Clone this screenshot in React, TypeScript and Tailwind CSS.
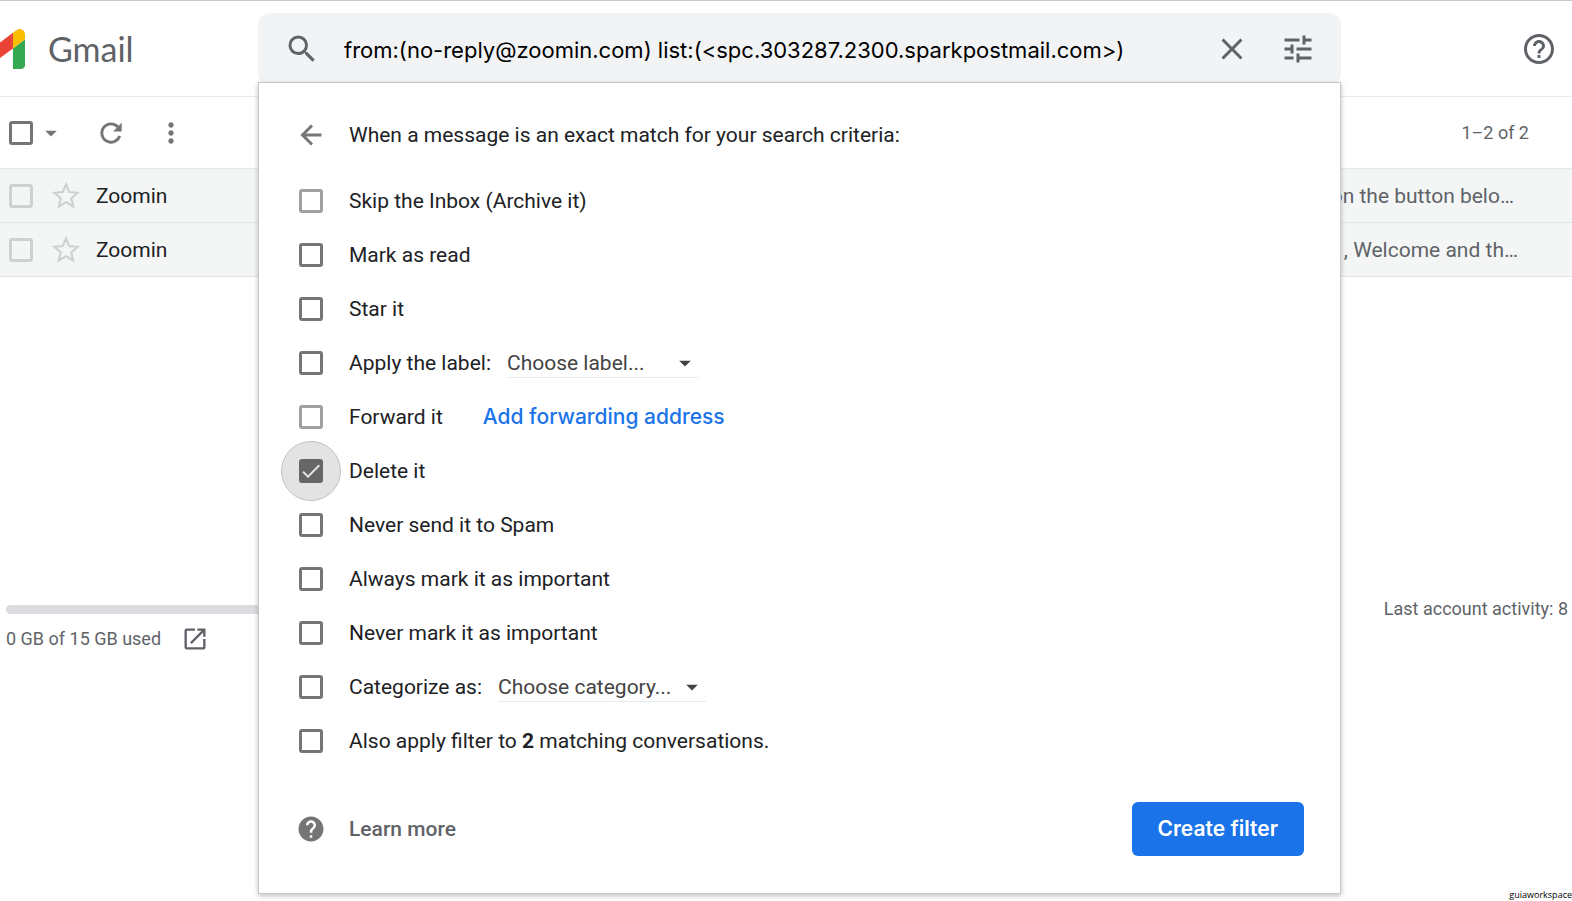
import { useState } from "react";
import type { ReactNode } from "react";
import {
  MdArrowDropDown,
  MdCheck,
  MdClose,
  MdHelp,
  MdHelpOutline,
  MdMoreVert,
  MdOpenInNew,
  MdSearch,
  MdTune,
} from "react-icons/md";
import { clsx } from "clsx";

const emails = [
  { id: "m1", sender: "Zoomin", snippet: "on the button belo…", pad: "pr-[58px]" },
  { id: "m2", sender: "Zoomin", snippet: ", Welcome and th…", pad: "pr-[54px]" },
];

type Action = {
  id: string;
  label: ReactNode;
  disabled?: boolean;
  extra?: ReactNode;
};

const actions: Action[] = [
  { id: "archive", label: "Skip the Inbox (Archive it)", disabled: true },
  { id: "read", label: "Mark as read" },
  { id: "star", label: "Star it" },
  {
    id: "label",
    label: "Apply the label:",
    extra: <Picker name="Label" placeholder="Choose label..." className="w-48" />,
  },
  {
    id: "forward",
    label: "Forward it",
    disabled: true,
    extra: (
      <a href="#forwarding" className="ml-6 font-['Google_Sans',Inter,sans-serif] font-medium text-[#1a73e8]">
        Add forwarding address
      </a>
    ),
  },
  { id: "delete", label: "Delete it" },
  { id: "notspam", label: "Never send it to Spam" },
  { id: "important", label: "Always mark it as important" },
  { id: "unimportant", label: "Never mark it as important" },
  {
    id: "category",
    label: "Categorize as:",
    extra: <Picker name="Category" placeholder="Choose category..." className="w-52" />,
  },
  {
    id: "existing",
    label: (
      <>
        Also apply filter to <b>2</b> matching conversations.
      </>
    ),
  },
];

function Picker({ name, placeholder, className }: { name: string; placeholder: string; className: string }) {
  return (
    <div className={clsx("relative border-b border-[#e8eaed] text-[#444]", className)}>
      <select aria-label={name} className="block h-7 w-full appearance-none bg-transparent outline-none">
        <option>{placeholder}</option>
      </select>
      <MdArrowDropDown size={28} className="pointer-events-none absolute right-0 top-0" />
    </div>
  );
}

function GmailLogo() {
  return (
    <svg viewBox="52 42 88 66" className="-ml-7 h-10 w-[53px] shrink-0">
      <path fill="#4285f4" d="M58 108h14V74L52 59v43c0 3.32 2.69 6 6 6" />
      <path fill="#34a853" d="M120 108h14c3.32 0 6-2.69 6-6V59l-20 15" />
      <path fill="#fbbc04" d="M120 48v26l20-15v-8c0-7.42-8.47-11.65-14.4-7.2" />
      <path fill="#ea4335" d="M72 74V48l24 18 24-18v26L96 92" />
      <path fill="#c5221f" d="M52 51v8l20 15V48l-5.6-4.2c-5.94-4.45-14.4-.22-14.4 7.2" />
    </svg>
  );
}

function BackIcon() {
  return (
    <svg viewBox="0 0 32 32" className="size-8" fill="none" stroke="currentColor" strokeWidth="3">
      <path d="M26.5 16H8M17 6.5L7.5 16l9.5 9.5" />
    </svg>
  );
}

function RefreshIcon() {
  return (
    <svg viewBox="0 0 32 32" className="size-8" fill="none" stroke="currentColor" strokeWidth="2.8">
      <path d="M23 10A9.2 9.2 0 1 0 24.7 19" />
      <path d="M26.7 5.8V14.5H18z" fill="currentColor" stroke="none" />
    </svg>
  );
}

function StarIcon() {
  return (
    <svg viewBox="0 0 24 24" className="size-7" fill="none" stroke="currentColor" strokeWidth="1.8">
      <path d="M12 17.27 18.18 21l-1.64-7.03L22 9.24l-7.19-.61L12 2 9.19 8.63 2 9.24l5.46 4.73L5.82 21z" />
    </svg>
  );
}

function FilterPanel() {
  const [checked, setChecked] = useState<Record<string, boolean>>({ delete: true });

  return (
    <div className="absolute inset-x-0 top-[69px] z-10 border border-[#c8c9ca] bg-white pt-[25px] pr-9 pb-[37px] pl-10 text-[#202124] shadow-[0_2px_5px_rgba(0,0,0,0.25)]">
      <div className="mb-3 flex h-[54px] items-center">
        <button aria-label="Back" className="-ml-1 mr-[22px] text-[#777]">
          <BackIcon />
        </button>
        <h2>When a message is an exact match for your search criteria:</h2>
      </div>

      {actions.map((action) => (
        <div key={action.id} className="flex h-[54px] items-center">
          <span className="relative mr-[26px] flex size-6 items-center justify-center">
            {checked[action.id] && (
              <span className="absolute -inset-[18px] rounded-full border border-[#bdc1c6] bg-[#e3e3e3]" />
            )}
            <input
              id={action.id}
              type="checkbox"
              checked={!!checked[action.id]}
              disabled={action.disabled}
              onChange={(e) => setChecked({ ...checked, [action.id]: e.target.checked })}
              className={clsx(
                "relative size-6 appearance-none rounded-[3px] border-3 checked:bg-[#666]",
                action.disabled ? "border-[#a0a0a0]" : checked[action.id] ? "border-[#666]" : "border-[#757575]"
              )}
            />
            {checked[action.id] && <MdCheck size={24} className="pointer-events-none absolute text-[#e3e3e3]" />}
          </span>
          <label htmlFor={action.id} className="mr-4">
            {action.label}
          </label>
          {action.extra}
        </div>
      ))}

      <div className="mt-[34px] flex items-center justify-between">
        <a href="#help" className="flex items-center gap-[23px] font-medium text-[#5f6368]">
          <MdHelp size={30} className="-ml-[3px] text-[#757575]" />
          Learn more
        </a>
        <button className="h-[54px] rounded-md bg-[#1a73e8] px-[26px] font-['Google_Sans',Inter,sans-serif] font-semibold text-white">
          Create filter
        </button>
      </div>
    </div>
  );
}

export default function App() {
  return (
    <div className="flex min-h-screen flex-col overflow-hidden bg-white font-[Roboto,sans-serif] text-[21px] leading-7">
      <header className="flex h-[97px] items-start border-t border-b border-t-[#c8c9ca] border-b-[#e8eaed] pt-3 text-[#5f6368]">
        <div className="flex h-[72px] w-[258px] shrink-0 items-center gap-[23px]">
          <GmailLogo />
          <span className="font-['Product_Sans',Lato,sans-serif] text-[34px]">Gmail</span>
        </div>

        <div className="relative h-[72px] flex-1">
          <form className="flex h-full items-center rounded-xl bg-[#f1f3f4] pr-[25px] pl-[26px]">
            <button type="button" aria-label="Search">
              <MdSearch size={36} />
            </button>
            <input
              aria-label="Search mail"
              defaultValue="from:(no-reply@zoomin.com) list:(<spc.303287.2300.sparkpostmail.com>)"
              className="ml-6 min-w-0 flex-1 bg-transparent pt-0.5 font-['Google_Sans',Inter,sans-serif] text-[22px] text-black outline-none"
            />
            <button type="button" aria-label="Clear search">
              <MdClose size={36} />
            </button>
            <button type="button" aria-label="Show search options" className="ml-[30px]">
              <MdTune size={36} />
            </button>
          </form>
          <FilterPanel />
        </div>

        <div className="flex h-[72px] w-[231px] shrink-0 items-center justify-end pr-[15px]">
          <button aria-label="Support">
            <MdHelpOutline size={36} />
          </button>
        </div>
      </header>

      <main>
        <div className="flex h-[71px] items-center pl-[9px] text-[#757575]">
          <input type="checkbox" aria-label="Select all" className="size-6 appearance-none rounded-[3px] border-3 border-[#757575]" />
          <button aria-label="Select" className="ml-1">
            <MdArrowDropDown size={28} />
          </button>
          <button aria-label="Refresh" className="ml-[30px]">
            <RefreshIcon />
          </button>
          <button aria-label="More" className="ml-7">
            <MdMoreVert size={32} />
          </button>
          <span className="ml-auto pr-[43px] text-lg text-[#5f6368]">1–2 of 2</span>
        </div>

        <ul className="border-t border-[#e5e8eb]">
          {emails.map((mail) => (
            <li key={mail.id} className="flex h-[54px] items-center border-b border-[#e1e5e8] bg-[#f4f6f6] pl-[9px]">
              <input
                type="checkbox"
                aria-label={"Select " + mail.sender}
                className="size-6 appearance-none rounded-[3px] border-3 border-[#cfd1d1]"
              />
              <button aria-label="Star" className="ml-[19px] text-[#cfd1d1]">
                <StarIcon />
              </button>
              <span className="ml-4 text-[#202124]">{mail.sender}</span>
              <span className={clsx("ml-auto text-[#5f6368]", mail.pad)}>{mail.snippet}</span>
            </li>
          ))}
        </ul>
      </main>

      <footer className="mt-[318px] flex items-start justify-between text-lg text-[#5f6368]">
        <div className="ml-1.5">
          <div className="mt-[10px] h-[9px] w-[300px] rounded-full bg-[#dadce0]" />
          <a href="#storage" className="mt-[11px] flex items-center gap-5">
            0 GB of 15 GB used
            <MdOpenInNew size={28} />
          </a>
        </div>
        <span className="pr-1">Last account activity: 8</span>
      </footer>

      <p className="mt-auto self-end font-['Open_Sans',sans-serif] text-[9px] leading-3 text-black">guiaworkspace</p>
    </div>
  );
}
